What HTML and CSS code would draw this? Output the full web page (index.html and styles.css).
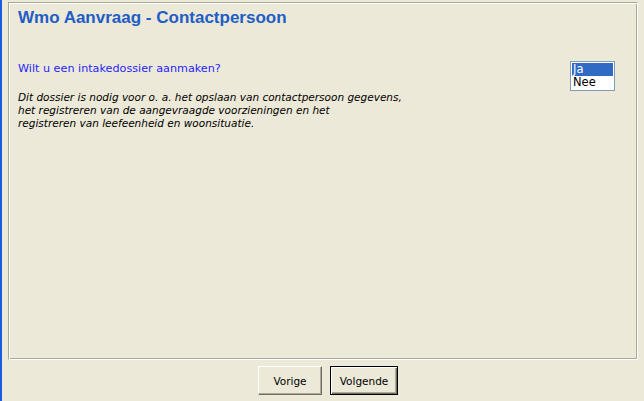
FILE: index.html
```html
<!DOCTYPE html>
<html lang="nl">
<head>
    <meta charset="UTF-8">
    <title>Wmo Aanvraag - Contactpersoon</title>
    <link rel="stylesheet" href="styles.css">
</head>
<body>

<div class="window">
    <div class="panel">
        <h1 class="title">Wmo Aanvraag - Contactpersoon</h1>

        <div class="question-row">
            <div class="question-text">
                <p class="question">Wilt u een intakedossier aanmaken?</p>
                <p class="note">Dit dossier is nodig voor o. a. het opslaan van contactpersoon gegevens,<br>
                het registreren van de aangevraagde voorzieningen en het<br>
                registreren van leefeenheid en woonsituatie.</p>
            </div>
            <div class="listbox">
                <div class="option selected">Ja</div>
                <div class="option">Nee</div>
            </div>
        </div>
    </div>

    <div class="buttons">
        <button class="btn">Vorige</button>
        <button class="btn default">Volgende</button>
    </div>
</div>

</body>
</html>
```

FILE: styles.css
```css
body {
    margin: 0;
    background-color: #ece9d8;
    font-family: "DejaVu Sans", Verdana, sans-serif;
}
.window {
    height: 401px;
    box-sizing: border-box;
    border-left: 2px solid #1c5ce0;
    padding: 2px 0 0 6px;
}
.panel {
    width: 630px;
    height: 358px;
    box-sizing: border-box;
    border: 1px solid;
    border-color: #aca899 #ffffff #ffffff #aca899;
    box-shadow: inset 1px 1px #ffffff, inset -1px -1px #aca899;
    padding: 5px 22px 0 9px;
}
.title {
    margin: 0;
    font-family: "Liberation Sans", Arial, sans-serif;
    font-size: 17px;
    font-weight: bold;
    color: #215dc6;
    line-height: 20px;
}
.question-row {
    display: flex;
    justify-content: space-between;
    margin-top: 34px;
}
.question {
    margin: 0;
    font-size: 11.2px;
    line-height: 13px;
    color: #1f1fff;
}
.note {
    margin: 16px 0 0 0;
    font-size: 10.5px;
    line-height: 13px;
    font-style: italic;
    color: #000000;
}
.listbox {
    width: 45px;
    height: 30px;
    box-sizing: border-box;
    border: 1px solid #7f9db9;
    background-color: #ffffff;
    padding: 1px;
    margin-top: -1px;
}
.option {
    font-size: 11.5px;
    line-height: 13px;
    padding-left: 1px;
    color: #000000;
}
.option.selected {
    background-color: #316ac5;
    color: #ffffff;
}
.buttons {
    display: flex;
    gap: 8px;
    padding: 6px 0 0 250px;
}
.btn {
    width: 64px;
    height: 29px;
    font-family: "DejaVu Sans", Verdana, sans-serif;
    font-size: 10.5px;
    color: #000000;
    background-color: #ece9d8;
    border: 1px solid;
    border-color: #ffffff #716f64 #716f64 #ffffff;
    box-shadow: inset -1px -1px #aca899;
    padding: 0;
}
.btn.default {
    width: 68px;
    border: 1px solid #000000;
    box-shadow: inset 1px 1px #ffffff, inset -1px -1px #716f64, inset -2px -2px #aca899;
}
```
